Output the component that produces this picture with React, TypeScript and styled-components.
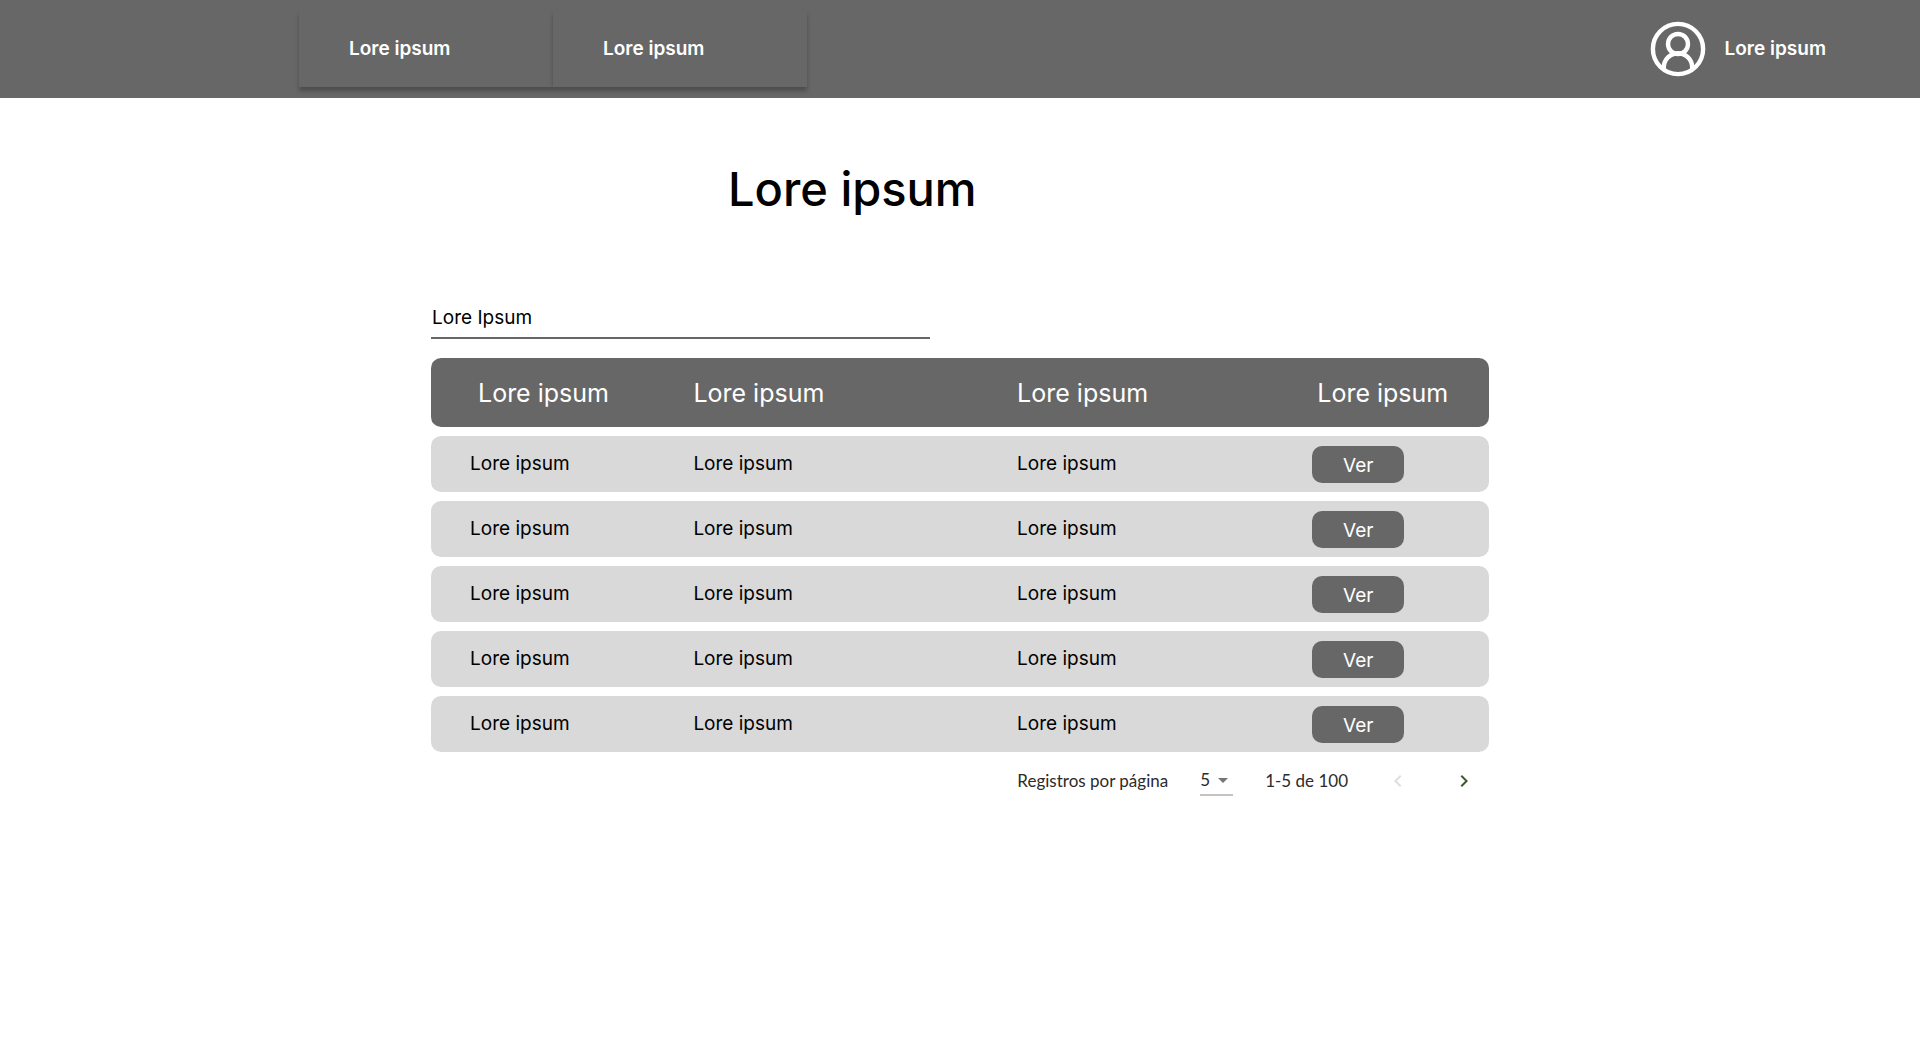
import React, { useState } from "react";
import styled, { createGlobalStyle } from "styled-components";

const GlobalStyle = createGlobalStyle`
  * { box-sizing: border-box; }
  body {
    margin: 0;
    background: #ffffff;
    color: #000000;
    font-family: Inter, "Open Sans", sans-serif;
    font-size: 19px;
    line-height: 28px;
  }
`;

const TopBar = styled.header`
  display: flex;
  align-items: stretch;
  justify-content: space-between;
  min-height: 98px;
  padding: 11px 94px 11px 299px;
  background: #676767;
  color: #ffffff;
`;

const Tabs = styled.nav`
  display: flex;
`;

const Tab = styled.a`
  display: flex;
  align-items: center;
  width: 254px;
  padding-left: 50px;
  background: #676767;
  box-shadow: 0 4px 4px rgba(0, 0, 0, 0.25);
  color: inherit;
  font-weight: 600;
  text-decoration: none;
`;

const Account = styled.button`
  display: flex;
  align-items: center;
  gap: 19px;
  padding: 0;
  border: 0;
  background: none;
  color: inherit;
  font: inherit;
  font-weight: 600;
  cursor: pointer;
`;

const Main = styled.main`
  width: 100%;
  max-width: 1058px;
  margin: 0 auto;
`;

const Title = styled.h1`
  margin: 0;
  padding: 56px 0 80px 297px;
  font-size: 47px;
  font-weight: 500;
  line-height: 70px;
`;

const Search = styled.input`
  display: block;
  width: 499px;
  max-width: 100%;
  height: 35px;
  margin-bottom: 10px;
  padding: 0 0 6px 1px;
  border: 0;
  border-bottom: 2px solid #676767;
  border-radius: 0;
  outline: none;
  background: none;
  color: #000000;
  font: inherit;
  &::placeholder { color: #000000; opacity: 1; }
`;

const Table = styled.table`
  width: 100%;
  table-layout: fixed;
  border-collapse: separate;
  border-spacing: 0 9px;
`;

const Column = styled.col<{ $share: string }>`
  width: ${(p) => p.$share};
`;

const HeadCell = styled.th<{ $inset?: number }>`
  height: 69px;
  padding: 0 0 0 ${(p) => p.$inset ?? 0}px;
  background: #676767;
  color: #ffffff;
  font-size: 25px;
  font-weight: 400;
  text-align: left;
  &:first-child { border-radius: 10px 0 0 10px; }
  &:last-child { border-radius: 0 10px 10px 0; }
`;

const Cell = styled.td<{ $inset?: number }>`
  height: 56px;
  padding: 0 0 0 ${(p) => p.$inset ?? 0}px;
  background: #d9d9d9;
  &:first-child { border-radius: 10px 0 0 10px; }
  &:last-child { border-radius: 0 10px 10px 0; }
`;

const ViewButton = styled.button`
  display: block;
  width: 92px;
  height: 37px;
  padding: 3px 0 0;
  border: 0;
  border-radius: 10px;
  background: #676767;
  color: #ffffff;
  font: inherit;
  cursor: pointer;
`;

const Pager = styled.footer`
  display: flex;
  align-items: center;
  justify-content: flex-end;
  padding: 5px 13px 0 0;
  color: #2b2b2b;
  font-family: Lato, "Open Sans", sans-serif;
  font-size: 17px;
`;

const SizeField = styled.label`
  display: flex;
  align-items: center;
  gap: 32px;
`;

const SizeBox = styled.span`
  display: grid;
  align-items: center;
  border-bottom: 2px solid #c4c4c4;
  & > * { grid-area: 1 / 1; }
  & > svg { justify-self: end; margin-right: 5px; pointer-events: none; }
`;

const SizeSelect = styled.select`
  width: 33px;
  height: 28px;
  padding: 0;
  border: 0;
  appearance: none;
  background: none;
  color: inherit;
  font: inherit;
`;

const Range = styled.span`
  margin: 0 38px 0 32px;
`;

const Arrow = styled.button`
  display: flex;
  padding: 0;
  border: 0;
  background: none;
  color: #3c5a2c;
  cursor: pointer;
  & + & { margin-left: 42px; }
  &:disabled { color: #dce0da; cursor: default; }
`;

const UserIcon = () => (
  <svg width="56" height="56" viewBox="0 0 56 56" fill="none" stroke="#ffffff" strokeWidth="4.4" aria-hidden="true">
    <circle cx="28" cy="28" r="25.1" />
    <circle cx="28" cy="23" r="10" />
    <path d="M13.8 48v-1.6a14.2 14.2 0 0 1 28.4 0V48" />
  </svg>
);

const Chevron = ({ d }: { d: string }) => (
  <svg width="24" height="24" viewBox="0 0 24 24" fill="currentColor" aria-hidden="true">
    <path d={d} />
  </svg>
);

const rows = [1, 2, 3, 4, 5];

export default function App() {
  const [query, setQuery] = useState("");
  return (
    <>
      <GlobalStyle />
      <TopBar>
        <Tabs>
          <Tab href="#">Lore ipsum</Tab>
          <Tab href="#">Lore ipsum</Tab>
        </Tabs>
        <Account type="button">
          <UserIcon />
          Lore ipsum
        </Account>
      </TopBar>
      <Main>
        <Title>Lore ipsum</Title>
        <Search
          aria-label="Lore Ipsum"
          placeholder="Lore Ipsum"
          value={query}
          onChange={(e) => setQuery(e.target.value)}
        />
        <Table>
          <colgroup>
            <Column $share="24.8%" />
            <Column $share="30.6%" />
            <Column $share="27.9%" />
            <Column $share="16.7%" />
          </colgroup>
          <thead>
            <tr>
              <HeadCell $inset={47}>Lore ipsum</HeadCell>
              <HeadCell>Lore ipsum</HeadCell>
              <HeadCell>Lore ipsum</HeadCell>
              <HeadCell $inset={5}>Lore ipsum</HeadCell>
            </tr>
          </thead>
          <tbody>
            {rows.map((id) => (
              <tr key={id}>
                <Cell $inset={39}>Lore ipsum</Cell>
                <Cell>Lore ipsum</Cell>
                <Cell>Lore ipsum</Cell>
                <Cell>
                  <ViewButton type="button">Ver</ViewButton>
                </Cell>
              </tr>
            ))}
          </tbody>
        </Table>
        <Pager>
          <SizeField>
            Registros por página
            <SizeBox>
              <SizeSelect defaultValue="5">
                <option>5</option>
                <option>10</option>
                <option>25</option>
              </SizeSelect>
              <svg width="10" height="5" viewBox="0 0 10 5" fill="#757575" aria-hidden="true">
                <path d="M0 0h10L5 5z" />
              </svg>
            </SizeBox>
          </SizeField>
          <Range>1-5 de 100</Range>
          <Arrow type="button" aria-label="Página anterior" disabled>
            <Chevron d="M15.41 7.41 14 6l-6 6 6 6 1.41-1.41L10.83 12z" />
          </Arrow>
          <Arrow type="button" aria-label="Página siguiente">
            <Chevron d="M10 6 8.59 7.41 13.17 12l-4.58 4.59L10 18l6-6z" />
          </Arrow>
        </Pager>
      </Main>
    </>
  );
}
